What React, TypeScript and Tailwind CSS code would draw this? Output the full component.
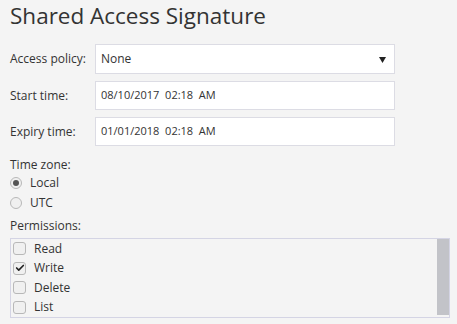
import { Check } from "lucide-react";

const FONT = { fontFamily: '"Open Sans", "Noto Sans", sans-serif' };

function Field({ label, children }: { label: string; children: React.ReactNode }) {
  return (
    <div className="flex items-center">
      <div className="w-[85px] shrink-0 text-[12px] text-[#333]">{label}</div>
      {children}
    </div>
  );
}

function TextBox({ value }: { value: string }) {
  return (
    <div className="flex h-[29px] w-[300px] items-center whitespace-pre border border-[#dcdce4] bg-white px-[5px] text-[11px] text-[#333]">
      {value}
    </div>
  );
}

function Radio({ label, checked }: { label: string; checked?: boolean }) {
  return (
    <div className="flex h-[20px] items-center gap-[8px]">
      <span className="flex h-[12px] w-[12px] items-center justify-center rounded-full border border-[#b8b8b8] bg-[#f0f0f0]">
        {checked && <span className="h-[6px] w-[6px] rounded-full bg-[#555]" />}
      </span>
      <span className="text-[12px] text-[#333]">{label}</span>
    </div>
  );
}

function CheckRow({ label, checked }: { label: string; checked?: boolean }) {
  return (
    <div className="flex h-[20px] items-center gap-[8px]">
      <span className="flex h-[13px] w-[13px] items-center justify-center rounded-[3px] border border-[#b8b8b8] bg-[#f0f0f0]">
        {checked && <Check className="h-[10px] w-[10px] text-[#222]" strokeWidth={4} />}
      </span>
      <span className="text-[12px] text-[#333]">{label}</span>
    </div>
  );
}

export default function App() {
  return (
    <div style={FONT} className="h-[324px] w-[457px] overflow-hidden bg-[#f4f4f4] pl-[10px] text-[#333]">
      <h1 className="pt-[1px] text-[22.5px] leading-[30px] font-normal text-[#333]">
        Shared Access Signature
      </h1>
      <div className="mt-[13px] flex flex-col gap-[7px]">
        <Field label="Access policy:">
          <div className="relative flex h-[30px] w-[300px] items-center border border-[#dcdce4] bg-white px-[5px] text-[12px] text-[#333]">
            None
            <svg className="absolute right-[8px] top-[12px]" width="7" height="6" viewBox="0 0 7 6">
              <path d="M0 0h7L3.5 6z" fill="#222" />
            </svg>
          </div>
        </Field>
        <Field label="Start time:">
          <TextBox value="08/10/2017  02:18  AM" />
        </Field>
        <Field label="Expiry time:">
          <TextBox value="01/01/2018  02:18  AM" />
        </Field>
      </div>
      <div className="mt-[11px] text-[12px] leading-[16px]">Time zone:</div>
      <div className="flex flex-col">
        <Radio label="Local" checked />
        <Radio label="UTC" />
      </div>
      <div className="mt-[5px] text-[12px] leading-[16px]">Permissions:</div>
      <div className="mt-[4px] flex h-[80px] w-[440px] border border-[#d4d4e4]">
        <div className="flex flex-1 flex-col pl-[2px]">
          <CheckRow label="Read" />
          <CheckRow label="Write" checked />
          <CheckRow label="Delete" />
          <CheckRow label="List" />
        </div>
        <div className="mb-[2px] w-[12px] bg-[#c2c3c8]" />
      </div>
    </div>
  );
}
